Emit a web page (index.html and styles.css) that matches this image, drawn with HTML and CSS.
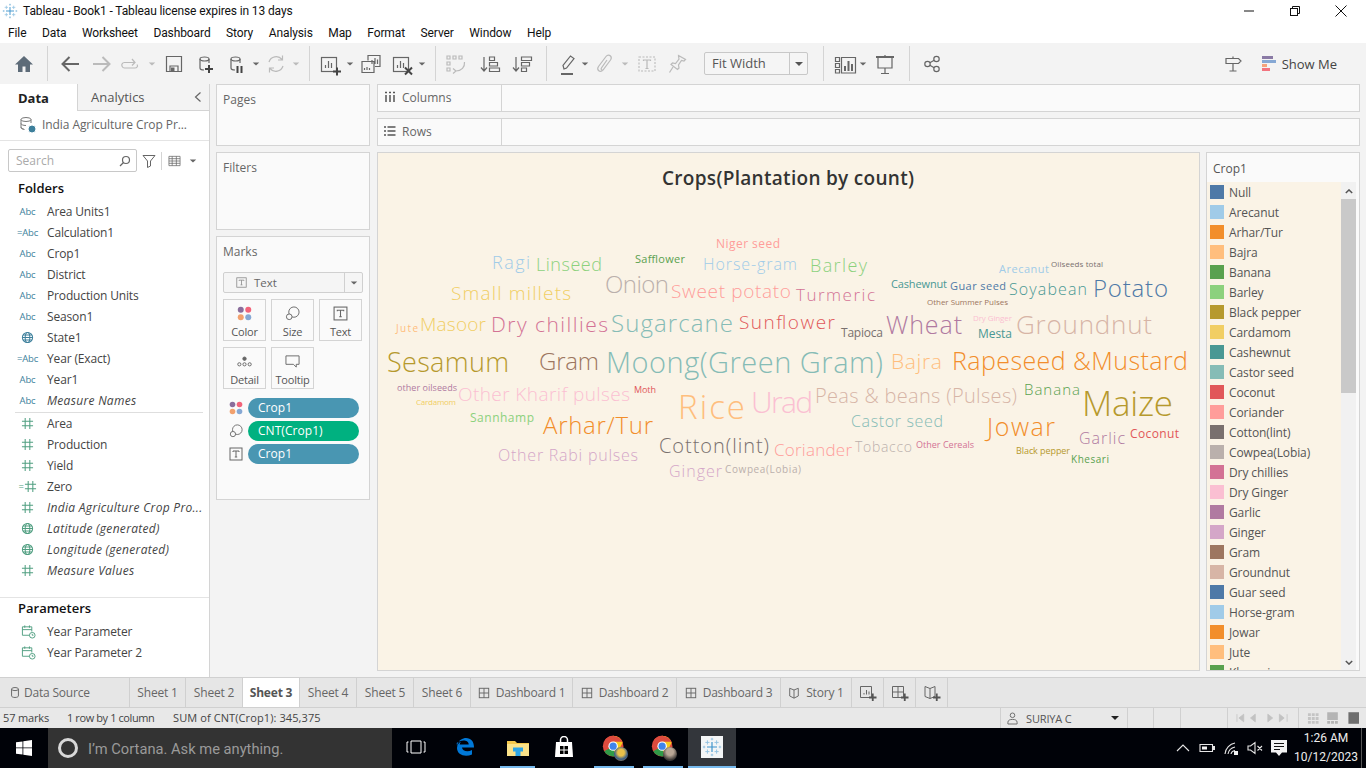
FILE: index.html
```html
<!DOCTYPE html>
<html lang="en">
<head>
<meta charset="utf-8">
<title>Tableau - Book1</title>
<link rel="stylesheet" href="styles.css">
</head>
<body>
<svg class="defs" aria-hidden="true">
  <symbol id="tlogo" viewBox="0 0 24 24">
    <path class="lg1" d="M12 6v12M6 12h12"/>
    <path class="lg2" d="M6.500 4v5M4 6.500h5M17.500 4v5M15 6.500h5M6.500 15v5M4 17.500h5M17.500 15v5M15 17.500h5M12 1v3M10.500 2.500h3M12 20v3M10.500 21.500h3M1 12h3M2.500 10.500v3M20 12h3M21.500 10.500v3"/>
  </symbol>
  <symbol id="cyl" viewBox="0 0 24 24"><ellipse cx="11.500" cy="7" rx="4.500" ry="2"/><path d="M7 7v9c0 1.300 2 2 4 2M16 7v4"/></symbol>
  <symbol id="abar" viewBox="0 0 24 24"><rect x="3.500" y="5.500" width="15" height="14"/><path d="M7.500 16v-3M10.500 16V9M13.500 16v-5"/></symbol>
  <symbol id="hash" viewBox="0 0 14 14"><path d="M4.500 1v12M9.500 1v12M1 4.500h12M1 9.500h12"/></symbol>
  <symbol id="globe" viewBox="0 0 14 14"><circle cx="7" cy="7" r="5.500"/><ellipse cx="7" cy="7" rx="2.500" ry="5.500"/><path d="M1.500 7h11M2.300 4.200h9.400M2.300 9.800h9.400"/></symbol>
  <symbol id="cal" viewBox="0 0 16 16"><path d="M9 12H1.500V3h10v5M1.500 6h10M4 1.500V4M9 1.500V4"/><circle cx="12" cy="12" r="3"/><path d="M12 10.500V12h1.300"/></symbol>
  <symbol id="sizeic" viewBox="0 0 16 16"><circle cx="9.500" cy="6.500" r="5.500"/><circle cx="4.500" cy="11.500" r="3" class="sizeic-small"/></symbol>
  <symbol id="tic" viewBox="0 0 14 14"><rect x="1" y="1" width="12" height="12"/><path d="M4 5V4h6v1M7 4v6M5.800 10h2.400"/></symbol>
  <symbol id="dots" viewBox="0 0 16 16"><circle cx="4" cy="4" r="3.200" fill="#8a6d9b"/><circle cx="12" cy="4" r="3.200" fill="#f2647a"/><circle cx="4" cy="12" r="3.200" fill="#f2a16e"/><circle cx="12" cy="12" r="3.200" fill="#86a8d4"/></symbol>
  <symbol id="dash" viewBox="0 0 14 14"><rect x="1.500" y="1.500" width="11" height="11"/><path d="M7 1.500v11M1.500 7h11"/></symbol>
  <symbol id="book" viewBox="0 0 14 14"><path d="M7 3.500 2 1.500v9l5 2.500 5-2.500v-9zM7 3.500v9.500"/></symbol>
  <symbol id="chrome" viewBox="0 0 28 28">
    <circle cx="13" cy="13" r="12" fill="#dd4b3e"/>
    <path d="M13 13 2.600 19A12 12 0 0 0 16 24.600z" fill="#2f9a47"/>
    <path d="M13 13 13 1A12 12 0 0 1 24 9L16 24.600z" fill="#f8c81c"/>
    <path d="M3 6.500A12 12 0 0 1 24 8H13z" fill="#dd4b3e"/>
    <circle cx="13" cy="13" r="5.500" fill="#fff"/><circle cx="13" cy="13" r="4.200" fill="#3f84ec"/>
  </symbol>
</svg>

<div class="app">
  <header class="titlebar">
    <div class="title-left">
      <svg class="title-logo"><use href="#tlogo"/></svg>
      <span>Tableau - Book1 - Tableau license expires in 13 days</span>
    </div>
    <div class="winctl">
      <span class="wbtn"><svg viewBox="0 0 12 12"><path d="M1 6h10"/></svg></span>
      <span class="wbtn"><svg viewBox="0 0 12 12"><rect x="1.500" y="3.500" width="7" height="7"/><path d="M3.500 3.500v-2h7v7h-2"/></svg></span>
      <span class="wbtn"><svg viewBox="0 0 12 12"><path d="M.5.500l11 11M11.500.500l-11 11"/></svg></span>
    </div>
  </header>
  <nav class="menubar">
    <span>File</span><span>Data</span><span>Worksheet</span><span>Dashboard</span><span>Story</span><span>Analysis</span><span>Map</span><span>Format</span><span>Server</span><span>Window</span><span>Help</span>
  </nav>

  <div class="toolbar">
    <svg class="ic ml12" viewBox="0 0 24 24"><path class="fhome" d="M12 4 3 12.500h3V20h4.500v-5.500h3V20H18v-7.500h3z"/></svg>
    <i class="sep ml11"></i>
    <svg class="ic ml10" viewBox="0 0 24 24"><path class="sk2" d="M21 12H5M11.500 5 4.500 12l7 7"/></svg>
    <svg class="ic ml8 dim" viewBox="0 0 24 24"><path class="sk2" d="M3 12h16M12.500 5l7 7-7 7"/></svg>
    <svg class="ic ml5 dim" viewBox="0 0 24 24"><path class="sk" d="M18 12.500c1.500 2-.5 3.500-2 3.500H5.500C3 16 2.500 13 3 12c.5-1 1.500-1.500 2.500-1.500H15M13 7l3 3.500-3 3"/></svg>
    <i class="caret ml5 dimc"></i>
    <svg class="ic ml6" viewBox="0 0 24 24"><path class="sk" d="M4.500 4.500h15v15h-15zM8 19.500V14h8v5.500"/><path class="fsave" d="M9 15.500h3.500v4H9z"/></svg>
    <svg class="ic ml7 strk"><use href="#cyl"/></svg>
    <svg class="ic ml-24" viewBox="0 0 24 24"><path class="skb" d="M12 17h8M16 13v8"/></svg>
    <svg class="ic ml7 strk"><use href="#cyl"/></svg>
    <svg class="ic ml-24" viewBox="0 0 24 24"><path class="skb" d="M13.500 14v7M17.500 14v7"/></svg>
    <i class="caret ml4"></i>
    <svg class="ic ml4 dim" viewBox="0 0 24 24"><path class="sk" d="M5 10a7.500 7.500 0 0 1 13-2.500M19 14a7.500 7.500 0 0 1-13 2.500M18.500 3.500v4.500H14M5.500 20.500V16H10"/></svg>
    <i class="caret ml4 dimc"></i>
    <i class="sep ml9"></i>
    <svg class="ic ml8 strk"><use href="#abar"/></svg>
    <svg class="ic ml-24" viewBox="0 0 24 24"><path class="skb" d="M15 19.500h8M19 15.500v8"/></svg>
    <i class="caret ml4"></i>
    <svg class="ic ml5" viewBox="0 0 24 24"><path class="sk" d="M9 8.500V3.500h12v11h-5M3 9.500h12v11H3zM13 12v-4M16 12V6M18.500 12V7.500M5.500 18v-2M8 18v-3M10.500 18v-2"/></svg>
    <svg class="ic ml7 strk"><use href="#abar"/></svg>
    <svg class="ic ml-24" viewBox="0 0 24 24"><path class="skb" d="M15 15.500l7 7M22 15.500l-7 7"/></svg>
    <i class="caret ml4"></i>
    <i class="sep ml9"></i>
    <svg class="ic ml8 dim" viewBox="0 0 24 24"><path class="sk" d="M3 4h3v3H3zM9 4h3v3H9zM15 4h3v3h-3zM3 10h3v3H3zM3 16h3v3H3zM20.500 10c.5 5-3 9-8.500 9M9 16.500l3 2.500-3 2.500"/></svg>
    <svg class="ic ml10" viewBox="0 0 24 24"><path class="sk" d="M6 5v14M3 15.500 6 19l3-3.500M11.500 5h5v3.500h-5zM11.500 10.500h8V14h-8zM11.500 16h10v3.500h-10z"/></svg>
    <svg class="ic ml8" viewBox="0 0 24 24"><path class="sk" d="M6 5v14M3 15.500 6 19l3-3.500M11.500 5h10v3.500h-10zM11.500 10.500h8V14h-8zM11.500 16h5v3.500h-5z"/></svg>
    <i class="sep ml12"></i>
    <svg class="ic ml9" viewBox="0 0 24 24"><path class="sk" d="M8 17l-1-3.500L14.500 4l3.500 2.500L10.500 16z"/><path class="sk2" d="M5 22h12"/></svg>
    <i class="caret ml1"></i>
    <svg class="ic ml4 dim" viewBox="0 0 24 24"><path class="sk" d="M17.500 8 10 18c-1.500 2-3.500 1.500-4.500.5s-1-2.500 0-4L13 4.500c1.500-2 3.500-1.500 4.500-.5s1 2.500 0 4l-7 9.500c-.5.800-1.500.800-2 .3s-.5-1.300 0-2L14 8"/></svg>
    <i class="caret ml4 dimc"></i>
    <svg class="ic ml6 dim" viewBox="0 0 24 24"><path class="skd" d="M4 5h16v14H4z"/><path class="sk" d="M8.500 9V8h7v1M12 8v8.500M10.500 16.500h3"/></svg>
    <svg class="ic ml6 dim" viewBox="0 0 24 24"><path class="sk" d="M13.500 3.500l7 4-1.500 1.500-2.500-.5-3 4.500.5 3-1.500 1.500-6.500-5 1.500-1.500 3 .5 3.500-4.500-.5-3zM8 15l-3.500 5.500"/></svg>
    <div class="fit"><span class="fit-label">Fit Width</span><span class="fit-arrow"><i class="caret caret-big"></i></span></div>
    <i class="sep ml15"></i>
    <svg class="ic ml10" viewBox="0 0 24 24"><path class="sk" d="M1.500 5.500h4v4h-4zM1.500 11.500h4v4h-4zM1.500 17.500h4v3.500h-4zM7.500 5.500h14V21h-14z"/><path class="sk2" d="M11 19v-5M14.500 19V9M18 19v-7"/></svg>
    <i class="caret ml1"></i>
    <svg class="ic ml6" viewBox="0 0 24 24"><path class="sk2" d="M3 5h18"/><path class="sk" d="M5 5v11h14V5M12 16v6M8 21.500h8M12 3v2"/></svg>
    <i class="sep ml12"></i>
    <svg class="ic ml10" viewBox="0 0 24 24"><path class="sk" d="M9.800 10.800l4.400-2.600M9.800 13.200l4.400 2.600"/><circle class="sk" cx="7.500" cy="12" r="2.700"/><circle class="sk" cx="16.500" cy="7" r="2.700"/><circle class="sk" cx="16.500" cy="17" r="2.700"/></svg>
    <div class="tb-right">
      <svg class="ic" viewBox="0 0 24 24"><path class="sk" d="M5 6.500h12.500L20 9l-2.500 2.500H5zM12 4.500v2M12 11.500V19M8.500 19h7"/></svg>
      <span class="sm-bars"><i class="b1"></i><i class="b2"></i><i class="b3"></i><i class="b4"></i></span>
      <span class="sm-label">Show Me</span>
    </div>
  </div>

  <main class="main">
    <aside class="leftpane">
      <div class="lp-tabs">
        <div class="lp-tab active">Data</div>
        <div class="lp-tab other">Analytics<svg class="collapse" viewBox="0 0 10 12"><path d="M7.500 1.500 2.500 6l5 4.500"/></svg></div>
      </div>
      <div class="ds-row">
        <svg class="ds-ic" viewBox="0 0 18 18"><ellipse cx="7" cy="3.500" rx="5" ry="2"/><path d="M2 3.500v8c0 1 1.500 1.800 3.500 2M12 3.500V7M2 7.500c0 1 2 2 5 2M2 11c0 1 1 1.500 2.500 1.800"/><circle class="ds-check" cx="13" cy="13" r="4"/></svg>
        <span>India Agriculture Crop Pr...</span>
      </div>
      <div class="search-row">
        <div class="search"><span>Search</span><svg viewBox="0 0 12 12"><circle cx="7" cy="5" r="3.500"/><path d="M4.500 7.500 1 11"/></svg></div>
        <svg class="filter-ic" viewBox="0 0 14 14"><path d="M1 1.500h12L8.500 7v5l-3 1.500V7z"/></svg>
        <i class="vsep"></i>
        <svg class="list-ic" viewBox="0 0 14 12"><path d="M1 1h12v10H1zM1 3.500h12M1 6h12M1 8.500h12M4.500 1v10M9 1v10"/></svg>
        <i class="caret"></i>
      </div>
      <h3 class="lp-h">Folders</h3>
      <ul class="fields first">
        <li><span class="ftype">Abc</span>Area Units1</li>
        <li><span class="ftype">=Abc</span>Calculation1</li>
        <li><span class="ftype">Abc</span>Crop1</li>
        <li><span class="ftype">Abc</span>District</li>
        <li><span class="ftype">Abc</span>Production Units</li>
        <li><span class="ftype">Abc</span>Season1</li>
        <li><span class="ftype"><svg class="fic blue"><use href="#globe"/></svg></span>State1</li>
        <li><span class="ftype">=Abc</span>Year (Exact)</li>
        <li><span class="ftype">Abc</span>Year1</li>
        <li class="it"><span class="ftype">Abc</span>Measure Names</li>
      </ul>
      <hr class="fdiv">
      <ul class="fields">
        <li><span class="ftype"><svg class="fic green"><use href="#hash"/></svg></span>Area</li>
        <li><span class="ftype"><svg class="fic green"><use href="#hash"/></svg></span>Production</li>
        <li><span class="ftype"><svg class="fic green"><use href="#hash"/></svg></span>Yield</li>
        <li><span class="ftype gr">=<svg class="fic green"><use href="#hash"/></svg></span>Zero</li>
        <li class="it"><span class="ftype"><svg class="fic green"><use href="#hash"/></svg></span>India Agriculture Crop Pro...</li>
        <li class="it"><span class="ftype"><svg class="fic green"><use href="#globe"/></svg></span>Latitude (generated)</li>
        <li class="it"><span class="ftype"><svg class="fic green"><use href="#globe"/></svg></span>Longitude (generated)</li>
        <li class="it"><span class="ftype"><svg class="fic green"><use href="#hash"/></svg></span>Measure Values</li>
      </ul>
      <div class="params">
        <h3 class="lp-h">Parameters</h3>
        <ul class="fields">
          <li><span class="ftype"><svg class="fic green cal"><use href="#cal"/></svg></span>Year Parameter</li>
          <li><span class="ftype"><svg class="fic green cal"><use href="#cal"/></svg></span>Year Parameter 2</li>
        </ul>
      </div>
    </aside>

    <section class="shelves">
      <div class="card pages"><h4>Pages</h4></div>
      <div class="card filters"><h4>Filters</h4></div>
      <div class="card marks">
        <h4>Marks</h4>
        <div class="mtype">
          <span class="mtype-l"><svg class="mk-t"><use href="#tic"/></svg>Text</span>
          <span class="mtype-a"><i class="caret"></i></span>
        </div>
        <div class="mbtns">
          <div class="mbtn"><svg class="mb-ic"><use href="#dots"/></svg>Color</div>
          <div class="mbtn"><svg class="mb-ic st"><use href="#sizeic"/></svg>Size</div>
          <div class="mbtn"><svg class="mb-ic st"><use href="#tic"/></svg>Text</div>
          <div class="mbtn"><svg class="mb-ic st" viewBox="0 0 16 16"><circle class="solid" cx="8" cy="5" r="1.800"/><circle cx="2.500" cy="11" r="1.700"/><circle cx="8" cy="11" r="1.700"/><circle cx="13.500" cy="11" r="1.700"/></svg>Detail</div>
          <div class="mbtn"><svg class="mb-ic st" viewBox="0 0 16 16"><path d="M1 2h14v9h-3v3l-3-3H1z"/></svg>Tooltip</div>
        </div>
        <div class="pills">
          <div class="pillrow"><svg class="pill-ic"><use href="#dots"/></svg><span class="pill">Crop1</span></div>
          <div class="pillrow"><svg class="pill-ic st"><use href="#sizeic"/></svg><span class="pill grn">CNT(Crop1)</span></div>
          <div class="pillrow"><svg class="pill-ic st"><use href="#tic"/></svg><span class="pill">Crop1</span></div>
        </div>
      </div>
    </section>

    <section class="work">
      <div class="shelf"><div class="shelf-l"><svg class="sh-ic" viewBox="0 0 12 12"><path d="M2 4v7M6 4v7M10 4v7M1 1.500h2M5 1.500h2M9 1.500h2"/></svg>Columns</div></div>
      <div class="shelf"><div class="shelf-l"><svg class="sh-ic" viewBox="0 0 12 12"><path d="M3.500 2h8M3.500 6h8M3.500 10h8M0 2h2M0 6h2M0 10h2"/></svg>Rows</div></div>
      <div class="viewrow">
        <div class="view">
          <svg class="cloud" viewBox="378 153 821 517" role="img" aria-label="Word cloud of crops by count">
            <text class="ttl" x="662" y="178" textLength="252">Crops(Plantation by count)</text>
            <text class="c11" x="716" y="243" font-size="12" textLength="64">Niger seed</text>
            <text class="c1" x="492" y="262" font-size="18" textLength="38">Ragi</text>
            <text class="c5" x="536" y="264" font-size="18" textLength="66">Linseed</text>
            <text class="c4" x="635" y="258" font-size="11" textLength="50">Safflower</text>
            <text class="c1" x="703" y="264" font-size="16" textLength="94">Horse-gram</text>
            <text class="c5" x="810" y="265" font-size="18" textLength="57">Barley</text>
            <text class="c1" x="999" y="268" font-size="11" textLength="50">Arecanut</text>
            <text class="c12" x="1051" y="263" font-size="8" textLength="52">Oilseeds total</text>
            <text class="c8" x="891" y="283" font-size="11" textLength="56">Cashewnut</text>
            <text class="c0" x="950" y="285" font-size="11" textLength="56">Guar seed</text>
            <text class="c8" x="1009" y="289" font-size="16" textLength="78">Soyabean</text>
            <text class="c0" x="1093" y="287" font-size="24" textLength="75">Potato</text>
            <text class="c18" x="927" y="301" font-size="8" textLength="81">Other Summer Pulses</text>
            <text class="c14" x="796" y="294" font-size="17" textLength="79">Turmeric</text>
            <text class="c11" x="671" y="291" font-size="19" textLength="120">Sweet potato</text>
            <text class="c13" x="605" y="283" font-size="24" textLength="64">Onion</text>
            <text class="c7" x="451" y="293" font-size="19" textLength="120">Small millets</text>
            <text class="c3" x="396" y="328" font-size="10" textLength="22">Jute</text>
            <text class="c7" x="420" y="324" font-size="19" textLength="66">Masoor</text>
            <text class="c14" x="491" y="324" font-size="21" textLength="117">Dry chillies</text>
            <text class="c9" x="611" y="322" font-size="24" textLength="122">Sugarcane</text>
            <text class="c10" x="739" y="322" font-size="19" textLength="96">Sunflower</text>
            <text class="c12" x="841" y="332" font-size="12" textLength="42">Tapioca</text>
            <text class="c16" x="886" y="324" font-size="25" textLength="76">Wheat</text>
            <text class="c15" x="973" y="317" font-size="8" textLength="39">Dry Ginger</text>
            <text class="c8" x="978" y="333" font-size="12" textLength="34">Mesta</text>
            <text class="c19" x="1016" y="324" font-size="26" textLength="136">Groundnut</text>
            <text class="c6" x="387" y="361" font-size="27" textLength="122">Sesamum</text>
            <text class="c18" x="539" y="360" font-size="24" textLength="60">Gram</text>
            <text class="c9" x="606" y="361" font-size="29" textLength="277">Moong(Green Gram)</text>
            <text class="c3" x="891" y="361" font-size="21" textLength="51">Bajra</text>
            <text class="c2" x="952" y="360" font-size="25" textLength="236">Rapeseed &amp;Mustard</text>
            <text class="c16" x="397" y="387" font-size="9" textLength="60">other oilseeds</text>
            <text class="c15" x="458" y="394" font-size="19" textLength="172">Other Kharif pulses</text>
            <text class="c10" x="634" y="389" font-size="9" textLength="22">Moth</text>
            <text class="c7" x="416" y="401" font-size="8" textLength="40">Cardamom</text>
            <text class="c3" x="678" y="406" font-size="33" textLength="67">Rice</text>
            <text class="c15" x="751" y="401" font-size="30" textLength="62">Urad</text>
            <text class="c19" x="815" y="395" font-size="20" textLength="202">Peas &amp; beans (Pulses)</text>
            <text class="c4" x="1024" y="389" font-size="15" textLength="56">Banana</text>
            <text class="c6" x="1082" y="402" font-size="35" textLength="91">Maize</text>
            <text class="c5" x="470" y="417" font-size="12" textLength="64">Sannhamp</text>
            <text class="c2" x="543" y="424" font-size="24" textLength="110">Arhar/Tur</text>
            <text class="c9" x="851" y="421" font-size="16" textLength="92">Castor seed</text>
            <text class="c2" x="987" y="426" font-size="25" textLength="68">Jowar</text>
            <text class="c16" x="1079" y="438" font-size="16" textLength="46">Garlic</text>
            <text class="c10" x="1130" y="433" font-size="12" textLength="49">Coconut</text>
            <text class="c12" x="659" y="445" font-size="20" textLength="110">Cotton(lint)</text>
            <text class="c11" x="774" y="449" font-size="17" textLength="78">Coriander</text>
            <text class="c13" x="855" y="446" font-size="14" textLength="57">Tobacco</text>
            <text class="c14" x="916" y="444" font-size="9" textLength="58">Other Cereals</text>
            <text class="c6" x="1016" y="450" font-size="9" textLength="54">Black pepper</text>
            <text class="c4" x="1071" y="459" font-size="10" textLength="38">Khesari</text>
            <text class="c17" x="498" y="455" font-size="16" textLength="140">Other Rabi pulses</text>
            <text class="c17" x="669" y="471" font-size="16" textLength="53">Ginger</text>
            <text class="c13" x="725" y="469" font-size="10" textLength="76">Cowpea(Lobia)</text>
          </svg>
        </div>
        <div class="legend">
          <div class="lg-h">Crop1</div>
          <div class="lg-body">
            <ul class="lg-list">
              <li><i class="sw b0"></i>Null</li>
              <li><i class="sw b1c"></i>Arecanut</li>
              <li><i class="sw b2c"></i>Arhar/Tur</li>
              <li><i class="sw b3c"></i>Bajra</li>
              <li><i class="sw b4c"></i>Banana</li>
              <li><i class="sw b5c"></i>Barley</li>
              <li><i class="sw b6c"></i>Black pepper</li>
              <li><i class="sw b7c"></i>Cardamom</li>
              <li><i class="sw b8c"></i>Cashewnut</li>
              <li><i class="sw b9c"></i>Castor seed</li>
              <li><i class="sw b10c"></i>Coconut</li>
              <li><i class="sw b11c"></i>Coriander</li>
              <li><i class="sw b12c"></i>Cotton(lint)</li>
              <li><i class="sw b13c"></i>Cowpea(Lobia)</li>
              <li><i class="sw b14c"></i>Dry chillies</li>
              <li><i class="sw b15c"></i>Dry Ginger</li>
              <li><i class="sw b16c"></i>Garlic</li>
              <li><i class="sw b17c"></i>Ginger</li>
              <li><i class="sw b18c"></i>Gram</li>
              <li><i class="sw b19c"></i>Groundnut</li>
              <li><i class="sw b0"></i>Guar seed</li>
              <li><i class="sw b1c"></i>Horse-gram</li>
              <li><i class="sw b2c"></i>Jowar</li>
              <li><i class="sw b3c"></i>Jute</li>
              <li><i class="sw b4c"></i>Khesari</li>
            </ul>
            <div class="scroll">
              <svg class="sc-ar" viewBox="0 0 10 6"><path d="M1 5l4-4 4 4"/></svg>
              <div class="sc-thumb"></div>
              <svg class="sc-ar end" viewBox="0 0 10 6"><path d="M1 1l4 4 4-4"/></svg>
            </div>
          </div>
        </div>
      </div>
    </section>
  </main>

  <div class="tabs">
    <div class="tab t-src"><svg class="tab-ic" viewBox="0 0 14 14"><ellipse cx="7" cy="3" rx="4" ry="1.800"/><path d="M3 3v8c0 1 1.800 1.800 4 1.800s4-.8 4-1.800V3"/></svg>Data Source</div>
    <div class="tab t56">Sheet 1</div>
    <div class="tab t57">Sheet 2</div>
    <div class="tab t57 active">Sheet 3</div>
    <div class="tab t57">Sheet 4</div>
    <div class="tab t57">Sheet 5</div>
    <div class="tab t57">Sheet 6</div>
    <div class="tab t102"><svg class="tab-ic"><use href="#dash"/></svg>Dashboard 1</div>
    <div class="tab t104"><svg class="tab-ic"><use href="#dash"/></svg>Dashboard 2</div>
    <div class="tab t104"><svg class="tab-ic"><use href="#dash"/></svg>Dashboard 3</div>
    <div class="tab t71"><svg class="tab-ic"><use href="#book"/></svg>Story 1</div>
    <div class="tab t32"><svg class="tab-new" viewBox="0 0 18 18"><path d="M1.500 2.500h11v11h-11zM5 10.500V9M7.500 10.500V6M10 10.500V7.500"/><path class="pl" d="M10 13.500h7.500M13.750 9.500v7.500"/></svg></div>
    <div class="tab t32"><svg class="tab-new" viewBox="0 0 18 18"><path d="M1.500 2.500h11v11h-11zM7 2.500v11M1.500 8h11"/><path class="pl" d="M10 13.500h7.500M13.750 9.500v7.500"/></svg></div>
    <div class="tab t32"><svg class="tab-new" viewBox="0 0 18 18"><path d="M7 4.500 2 2.500v10l5 2 5-2v-10zM7 4.500v10"/><path class="pl" d="M10 13.500h7.500M13.750 9.500v7.500"/></svg></div>
  </div>

  <div class="status">
    <span class="st-a">57 marks</span>
    <span class="st-b">1 row by 1 column</span>
    <span class="st-c">SUM of CNT(Crop1): 345,375</span>
    <div class="st-user"><svg viewBox="0 0 12 14"><circle cx="6" cy="3.500" r="2.500"/><path d="M1 13v-2c0-2 2-3 5-3s5 1 5 3v2z"/></svg><span>SURIYA C</span><i class="caret blk"></i></div>
    <div class="st-cell w26"></div>
    <div class="st-cell w27"></div>
    <div class="st-cell w47"></div>
    <div class="st-nav">
      <svg viewBox="0 0 56 10"><path d="M1 1v8M8 1 3 5l5 4zM20 1l-5 4 5 4zM33 1l5 4-5 4zM45 1l5 4-5 4zM53 1v8"/></svg>
    </div>
    <div class="st-views">
      <svg viewBox="0 0 54 12"><path class="v1" d="M1 1h3v3H1zM5 1h3v3H5zM9 1h3v3H9zM1 5h3v3H1zM5 5h3v3H5zM9 5h3v3H9zM1 9h3v3H1zM5 9h3v3H5zM9 9h3v3H9z"/><path class="v2" d="M21 0h11v8H21zM21 9h3v3h-3zM25 9h3v3h-3zM29 9h3v3h-3z"/><path class="v3" d="M43 0h11v12H43z"/></svg>
    </div>
  </div>

  <footer class="taskbar">
    <div class="start"><svg viewBox="0 0 16 16"><path d="M0 2.300 6.500 1.400v6.100H0zM7.300 1.300 16 0v7.500H7.300zM0 8.300h6.500v6.200L0 13.700zM7.300 8.300H16V16l-8.700-1.200z"/></svg></div>
    <div class="cortana"><i class="ring"></i><span>I’m Cortana. Ask me anything.</span></div>
    <div class="tk tk-view"><svg viewBox="0 0 20 14"><path d="M5 1h10v12H5zM2.500 2H1v10h1.500M17.500 2H19v10h-1.500"/></svg></div>
    <div class="tk tk-edge"><svg viewBox="0 0 20 20"><path d="M2 9C3 3 8 1 11 1c5 0 8 3.500 8 9.500H7c.2 3.500 5.500 5 10 2.500v4.500c-7 3-15 .5-15-6.500 0-3 2-5.500 4-6.500-.8 1-1.200 2-1.300 3h9c0-4.500-7-5.500-12-1.500z"/></svg></div>
    <div class="tk tk-files on"><svg viewBox="0 0 22 18"><path class="fo1" d="M0 3h8l2 2h12v13H0z"/><path class="fo2" d="M0 6h22v12H0z"/><path class="fo3" d="M6 9.500h10v4h-2.500V18h-5v-4.500H6z"/></svg></div>
    <div class="tk tk-store"><svg viewBox="0 0 20 22"><path class="sb" d="M2 6h16l1 15H1z"/><path class="sh" d="M6.500 7V4a3.500 3.500 0 0 1 7 0v3"/><path class="sw4" d="M6 10h3.500v3.500H6zM10.500 10H14v3.500h-3.500zM6 14.500h3.500V18H6zM10.500 14.500H14V18h-3.500z"/></svg></div>
    <div class="tk tk-c1 on"><svg class="chr"><use href="#chrome"/></svg><i class="ava a1"></i></div>
    <div class="tk tk-c2 on"><svg class="chr"><use href="#chrome"/></svg><i class="ava a2"></i></div>
    <div class="tk tk-tab on"><span class="tab-tile"><svg><use href="#tlogo"/></svg></span></div>
    <div class="tray">
      <svg class="tr" viewBox="0 0 16 16"><path d="M2 11l6-6 6 6"/></svg>
      <svg class="tr" viewBox="0 0 16 16"><path d="M1 4.500h12.500v7H1zM14.500 6.500h1v3h-1z"/><path class="trf" d="M3 6.500h5v3H3z"/></svg>
      <svg class="tr" viewBox="0 0 16 16"><path d="M2 14C2.500 8 7 4 12 3M5 14c.5-3.500 3-6 7-7M8 14c.3-1.500 1.500-3 4-3.500"/><path class="trf" d="M11 11h4v4h-4z"/></svg>
      <svg class="tr" viewBox="0 0 16 16"><path d="M1 6h2.500L8 2.500v11L3.500 10H1zM10.500 6l4.500 4.500M15 6l-4.500 4.500"/></svg>
      <svg class="tr tr-n" viewBox="0 0 16 16"><path class="trf" d="M0 0h16v12.500h-5L8 16l-3-3.500H0z"/><path class="trl" d="M3 3.500h10M3 6.500h10M3 9.500h6"/></svg>
      <div class="clock"><span>1:26 AM</span><span>10/12/2023</span></div>
      <i class="desk"></i>
    </div>
  </footer>
</div>
</body>
</html>
```

FILE: styles.css
```css
* { box-sizing: border-box; }
html, body { margin: 0; padding: 0; }
body {
  width: 1366px; height: 768px; overflow: hidden; background: #fff;
  font-family: "Open Sans", "Noto Sans", sans-serif; font-size: 12px; color: #444;
}
.defs { position: absolute; width: 0; height: 0; }
.app { display: flex; flex-direction: column; width: 1366px; height: 768px; }
ul { list-style: none; margin: 0; padding: 0; }
h3, h4 { margin: 0; font-weight: 400; }
i { display: block; font-style: normal; }

.lg1 { stroke: #3d93cc; stroke-width: 1.400; fill: none; }
.lg2 { stroke: #8fc0df; stroke-width: 1.100; fill: none; }

/* title + menu */
.titlebar { display: flex; justify-content: space-between; height: 21px; background: #fff; }
.title-left { display: flex; align-items: center; padding-top: 1px; font-family: Roboto, sans-serif; font-size: 12px; letter-spacing: -.12px; color: #111; }
.title-logo { width: 16px; height: 16px; margin: 0 5px 0 2px; }
.winctl { display: flex; padding-right: 2px; }
.wbtn { width: 46px; display: flex; align-items: center; justify-content: center; }
.wbtn svg { width: 12px; height: 12px; fill: none; stroke: #111; stroke-width: 1; }
.menubar { display: flex; align-items: center; gap: 15.500px; height: 22px; padding: 2px 0 0 8px; background: #fff; font-family: Roboto, sans-serif; font-size: 12px; letter-spacing: -.1px; color: #111; }

/* toolbar */
.toolbar { display: flex; align-items: center; height: 41px; background: #f3f3f3; }
.ic { width: 24px; height: 24px; flex: none; overflow: visible; }
.sk { fill: none; stroke: #666; stroke-width: 1.200; }
.sk2 { fill: none; stroke: #666; stroke-width: 2; }
.skb { fill: none; stroke: #444; stroke-width: 2; }
.skd { fill: none; stroke: #666; stroke-width: 1.100; stroke-dasharray: 2 1.500; }
.strk { fill: none; stroke: #666; stroke-width: 1.200; }
.fhome { fill: #5d6b78; }
.fsave { fill: #666; }
.dim { opacity: .4; }
.sep { width: 1px; height: 35px; background: #d4d4d4; flex: none; }
.caret { width: 0; height: 0; flex: none; border-left: 4px solid transparent; border-right: 4px solid transparent; border-top: 4px solid #666; transform: scale(.8); }
.dimc { opacity: .4; }
.caret-big { transform: none; border-top-color: #555; }
.ml1 { margin-left: 1px; } .ml4 { margin-left: 4px; } .ml5 { margin-left: 5px; } .ml6 { margin-left: 6px; }
.ml7 { margin-left: 7px; } .ml8 { margin-left: 8px; } .ml9 { margin-left: 9px; } .ml10 { margin-left: 10px; }
.ml11 { margin-left: 11px; } .ml12 { margin-left: 12px; } .ml15 { margin-left: 15px; } .ml-24 { margin-left: -24px; }
.fit { display: flex; width: 104px; height: 23px; margin-left: 15px; border: 1px solid #c8c8c8; border-radius: 2px; background: #f5f5f5; font-size: 13px; color: #555; }
.fit-label { flex: 1; padding-left: 7px; line-height: 20px; }
.fit-arrow { width: 18px; border-left: 1px solid #c8c8c8; display: flex; align-items: center; justify-content: center; }
.tb-right { margin-left: auto; display: flex; align-items: center; padding-right: 29px; }
.sm-bars { display: flex; flex-direction: column; gap: 1px; width: 14px; margin: 0 6px 0 17px; }
.sm-bars i { height: 3px; }
.b1 { width: 11px; background: #8a7aa5; } .b2 { width: 14px; background: #86a8d4; } .b3 { width: 5px; background: #f4a37c; } .b4 { width: 8px; background: #f2747f; }
.sm-label { font-size: 13px; color: #444; }

/* main */
.main { flex: 1; display: flex; min-height: 0; background: #f3f3f3; }
.leftpane { width: 210px; background: #fff; border-right: 1px solid #d4d4d4; display: flex; flex-direction: column; }
.lp-tabs { display: flex; height: 27px; }
.lp-tab { display: flex; align-items: center; font-size: 13px; }
.lp-tab.active { width: 77px; padding-left: 18px; font-weight: 700; color: #222; }
.lp-tab.other { flex: 1; padding-left: 13px; background: #f3f3f3; border-left: 1px solid #d4d4d4; border-bottom: 1px solid #d4d4d4; color: #555; justify-content: space-between; padding-right: 6px; }
.collapse { width: 10px; height: 12px; fill: none; stroke: #666; stroke-width: 1.200; }
.ds-row { display: flex; align-items: center; height: 30px; padding: 0 0 2px 19px; border-bottom: 1px solid #e4e4e4; color: #666; letter-spacing: -.08px; }
.ds-ic { width: 18px; height: 18px; margin-right: 5px; fill: none; stroke: #777; stroke-width: 1; }
.ds-check { fill: #3d7f9b; stroke: #fff; }
.search-row { display: flex; align-items: center; height: 23px; margin-top: 8px; padding-left: 8px; }
.search { width: 129px; height: 23px; display: flex; align-items: center; justify-content: space-between; padding: 0 5px 0 7px; border: 1px solid #c8c8c8; border-radius: 2px; color: #aaa; }
.search svg { width: 12px; height: 12px; fill: none; stroke: #666; stroke-width: 1.200; }
.filter-ic { width: 14px; height: 14px; margin-left: 5px; fill: none; stroke: #666; stroke-width: 1; }
.vsep { width: 1px; height: 18px; background: #d4d4d4; margin-left: 5px; }
.list-ic { width: 13px; height: 12px; margin-left: 6px; fill: none; stroke: #666; stroke-width: .8; }
.search-row .caret { margin-left: 8px; }
.lp-h { height: 20px; line-height: 20px; padding-left: 18px; font-size: 13px; font-weight: 600; color: #111; }
.search-row + .lp-h { margin-top: 6px; }
.fields { margin-top: 3px; }
.fields.first { margin-bottom: 1px; }
.fields li { display: flex; align-items: center; height: 21px; padding-left: 16px; color: #444; white-space: nowrap; font-size: 12px; letter-spacing: -.15px; }
.fields li.it { font-style: italic; letter-spacing: .3px; }
.ftype { display: flex; align-items: center; justify-content: center; width: 23px; margin-right: 8px; font-size: 9.500px; color: #3d7f9b; letter-spacing: -.2px; font-style: normal; }
.ftype.gr { color: #4f9e80; }
.fic { width: 13px; height: 13px; fill: none; stroke-width: 1.100; }
.fic.cal { width: 15px; height: 15px; stroke-width: 1; margin-left: 2px; }
.blue { stroke: #3d7f9b; }
.green { stroke: #4f9e80; }
.fdiv { margin: 0 6px 0 15px; border: 0; border-top: 1px solid #dedede; height: 1px; }
.fdiv + .fields { margin-top: 0; }
.params { margin-top: 16px; border-top: 1px solid #e4e4e4; }

/* shelves */
.shelves { width: 154px; margin-left: 6px; display: flex; flex-direction: column; gap: 6px; }
.card { background: #fafafa; border: 1px solid #d4d4d4; padding: 6px; }
.card h4 { font-size: 12px; color: #666; line-height: 18px; }
.pages { height: 62px; margin-top: 0; }
.filters { height: 78px; }
.marks { height: 264px; }
.mtype { display: flex; height: 21px; margin-top: 11px; border: 1px solid #d0d0d0; background: #f5f5f5; border-radius: 2px; }
.mtype-l { flex: 1; display: flex; align-items: center; padding-left: 12px; color: #666; font-size: 11.500px; }
.mk-t { width: 11px; height: 11px; margin-right: 7px; fill: none; stroke: #888; stroke-width: 1; }
.mtype-a { width: 18px; border-left: 1px solid #d0d0d0; display: flex; align-items: center; justify-content: center; }
.mbtns { display: grid; grid-template-columns: 43px 43px 43px; column-gap: 5px; row-gap: 6px; margin-top: 6px; }
.mbtn { height: 42px; display: flex; flex-direction: column; align-items: center; justify-content: flex-start; padding-top: 6px; gap: 4px; border: 1px solid #d4d4d4; background: #fafafa; font-size: 11px; color: #555; line-height: 14px; white-space: nowrap; letter-spacing: -.2px; }
.mb-ic { width: 15px; height: 15px; flex: none; }
.st { fill: none; stroke: #666; stroke-width: 1; }
.solid { fill: #666; }
.sizeic-small { fill: #fafafa; }
.pills { margin-top: 9px; display: flex; flex-direction: column; gap: 3px; }
.pillrow { display: flex; align-items: center; height: 20px; }
.pill-ic { width: 14px; height: 14px; margin: 0 5px 0 6px; flex: none; }
.pill { width: 111px; height: 20px; margin-left: 0; padding-left: 10px; border-radius: 10px; background: #4996b2; color: #fff; line-height: 19px; font-size: 12px; letter-spacing: .05px; }
.pill.grn { background: #00b180; }

/* work */
.work { flex: 1; margin: 0 6px 6px 7px; display: flex; flex-direction: column; gap: 6px; min-width: 0; }
.shelf { height: 28px; flex: none; background: #fafafa; border: 1px solid #d4d4d4; }
.shelf-l { display: flex; align-items: center; width: 124px; height: 100%; padding: 0 0 2px 6px; border-right: 1px solid #d4d4d4; color: #666; font-size: 12px; }
.sh-ic { width: 12px; height: 12px; margin-right: 6px; fill: none; stroke: #555; stroke-width: 1.500; }
.viewrow { flex: 1; display: flex; gap: 6px; min-height: 0; }
.view { width: 823px; background: #faf3e6; border: 1px solid #d4d4d4; }
.cloud { display: block; width: 821px; height: 517px; }
.cloud text { font-family: "Open Sans", "Noto Sans", sans-serif; font-weight: 300; dominant-baseline: central; }
.cloud text[font-size="8"], .cloud text[font-size="9"], .cloud text[font-size="10"], .cloud text[font-size="11"], .cloud text[font-size="12"] { font-weight: 400; }
.cloud .ttl { font-size: 19px; font-weight: 600; fill: #333; }
.c0 { fill: #4e79a7; } .c1 { fill: #a0cbe8; } .c2 { fill: #f28e2b; } .c3 { fill: #ffbe7d; } .c4 { fill: #59a14f; }
.c5 { fill: #8cd17d; } .c6 { fill: #b6992d; } .c7 { fill: #f1ce63; } .c8 { fill: #499894; } .c9 { fill: #86bcb6; }
.c10 { fill: #e15759; } .c11 { fill: #ff9d9a; } .c12 { fill: #79706e; } .c13 { fill: #bab0ac; } .c14 { fill: #d37295; }
.c15 { fill: #fabfd2; } .c16 { fill: #b07aa1; } .c17 { fill: #d4a6c8; } .c18 { fill: #9d7660; } .c19 { fill: #d7b5a6; }

/* legend */
.legend { flex: 1; display: flex; flex-direction: column; background: #fafafa; border: 1px solid #d4d4d4; }
.lg-h { height: 29px; flex: none; padding: 6px 0 0 6px; color: #555; font-size: 12px; line-height: 20px; }
.lg-body { flex: 1; display: flex; min-height: 0; }
.lg-list { width: 134px; background: #faf3e6; overflow: hidden; padding-top: 0; }
.lg-list li { display: flex; align-items: center; height: 20px; padding-left: 3px; color: #555; font-size: 12px; white-space: nowrap; letter-spacing: -.1px; }
.sw { width: 14px; height: 14px; margin-right: 5px; flex: none; }
.b0 { background: #4e79a7; } .b1c { background: #a0cbe8; } .b2c { background: #f28e2b; } .b3c { background: #ffbe7d; } .b4c { background: #59a14f; }
.b5c { background: #8cd17d; } .b6c { background: #b6992d; } .b7c { background: #f1ce63; } .b8c { background: #499894; } .b9c { background: #86bcb6; }
.b10c { background: #e15759; } .b11c { background: #ff9d9a; } .b12c { background: #79706e; } .b13c { background: #bab0ac; } .b14c { background: #d37295; }
.b15c { background: #fabfd2; } .b16c { background: #b07aa1; } .b17c { background: #d4a6c8; } .b18c { background: #9d7660; } .b19c { background: #d7b5a6; }
.scroll { width: 15px; display: flex; flex-direction: column; align-items: center; background: #f1f1f1; }
.sc-ar { width: 8px; height: 5px; margin-top: 7px; fill: none; stroke: #555; stroke-width: 1.800; flex: none; }
.sc-thumb { width: 15px; height: 194px; margin-top: 5px; background: #c9c9c9; flex: none; }
.sc-ar.end { margin-top: auto; margin-bottom: 5px; }

/* tabs */
.tabs { display: flex; height: 31px; flex: none; background: #e6e6e6; border-top: 1px solid #d0d0d0; border-bottom: 1px solid #d0d0d0; }
.tab { display: flex; align-items: center; justify-content: center; flex: none; border-right: 1px solid #d0d0d0; color: #666; font-size: 12px; white-space: nowrap; letter-spacing: -.2px; }
.tab.active { background: #fff; font-weight: 700; color: #555; }
.t-src { width: 130px; justify-content: flex-start; padding-left: 9px; }
.t56 { width: 56px; } .t57 { width: 57px; } .t102 { width: 102px; } .t104 { width: 104px; } .t71 { width: 71px; } .t32 { width: 32px; }
.tab-ic { width: 12px; height: 12px; margin-right: 6px; fill: none; stroke: #666; stroke-width: 1.100; flex: none; }
.t-src .tab-ic { margin-right: 3px; height: 13px; }
.tab-new { width: 18px; height: 18px; fill: none; stroke: #666; stroke-width: 1; }
.tab-new .pl { stroke: #555; stroke-width: 1.800; }

/* status */
.status { display: flex; align-items: center; height: 20px; flex: none; background: #e8e8e8; font-size: 11px; color: #444; letter-spacing: -.15px; }
.st-a { margin: 0 0 1px 3px; width: 64px; } .st-b { width: 106px; margin-bottom: 1px; letter-spacing: -.4px; }
.st-c { flex: 1; margin-bottom: 1px; letter-spacing: .1px; }
.st-user { display: flex; align-items: center; width: 127px; height: 100%; padding-left: 6px; border-left: 1px solid #d0d0d0; }
.st-user svg { width: 11px; height: 13px; margin-right: 8px; fill: none; stroke: #666; stroke-width: 1; flex: none; }
.st-user span { width: 85px; font-size: 11px; color: #555; }
.caret.blk { border-top-color: #222; transform: none; border-top-width: 4px; }
.st-cell, .st-nav, .st-views { height: 100%; border-left: 1px solid #d0d0d0; display: flex; align-items: center; justify-content: center; }
.w26 { width: 26px; } .w27 { width: 27px; } .w47 { width: 47px; }
.st-nav { width: 71px; } .st-nav svg { width: 54px; height: 10px; fill: #c2c2c2; stroke: #c2c2c2; stroke-width: .8; }
.st-views { width: 68px; } .st-views svg { width: 52px; height: 12px; }
.v1 { fill: #c4c4c4; } .v2 { fill: #b4b4b4; } .v3 { fill: #6e6e6e; }

/* taskbar */
.taskbar { display: flex; align-items: stretch; height: 40px; flex: none; background: #000208; color: #fff; }
.start { width: 48px; display: flex; align-items: center; justify-content: center; }
.start svg { width: 16px; height: 16px; fill: #fff; }
.cortana { width: 344px; display: flex; align-items: center; padding-left: 10px; background: #333; font-family: Roboto, sans-serif; font-size: 14.700px; color: #9a9a9a; }
.cortana span { padding-top: 2px; }
.ring { width: 20px; height: 20px; margin-right: 10px; border: 3px solid #d8d8d8; border-radius: 50%; }
.tk { position: relative; display: flex; align-items: center; justify-content: center; flex: none; border-bottom: 2px solid transparent; }
.tk.on { border-bottom-color: #76b9ed; }
.tk-view { width: 48px; } .tk-view svg { width: 20px; height: 14px; fill: none; stroke: #fff; stroke-width: 1; }
.tk-edge { width: 50px; } .tk-edge svg { width: 20px; height: 20px; fill: #0078d7; }
.tk-files { width: 35px; margin-left: 10px; } .tk-files svg { width: 22px; height: 18px; }
.fo1 { fill: #f5c94c; } .fo2 { fill: #fbe38a; } .fo3 { fill: #2ea6e6; }
.tk-store { width: 48px; margin: 0 6px 0 5px; } .tk-store svg { width: 20px; height: 22px; }
.sb { fill: #fff; } .sh { fill: none; stroke: #fff; stroke-width: 1.500; } .sw4 { fill: #000; }
.tk-c1 { width: 40px; } .tk-c2 { width: 40px; margin-left: 9px; }
.chr { width: 24px; height: 24px; }
.ava { position: absolute; right: 6px; bottom: 5px; width: 14px; height: 14px; border-radius: 50%; }
.a1 { background: radial-gradient(circle at 50% 40%, #e8c04a 0 30%, #3a5f8a 60%, #c9872e 100%); }
.a2 { background: radial-gradient(circle at 50% 35%, #b9a796 0 30%, #3b3735 70%); }
.tk-tab { width: 48px; margin-left: 5px; background: #33363b; }
.tab-tile { width: 22px; height: 22px; background: #f3f5f6; display: flex; align-items: center; justify-content: center; }
.tab-tile svg { width: 20px; height: 20px; }
.tray { margin-left: auto; display: flex; align-items: center; }
.tr { width: 16px; height: 16px; margin-left: 8px; fill: none; stroke: #e6e6e6; stroke-width: 1.100; flex: none; }
.trf { fill: #f2f2f2; stroke: none; }
.tr-n .trl { stroke: #111; stroke-width: 1.100; }
.clock { width: 60px; margin-left: 9px; display: flex; flex-direction: column; align-items: center; font-family: Roboto, sans-serif; font-size: 12px; line-height: 19px; color: #eee; }
.desk { width: 1px; height: 40px; margin-left: 5px; margin-right: 4px; background: #555; }
```
